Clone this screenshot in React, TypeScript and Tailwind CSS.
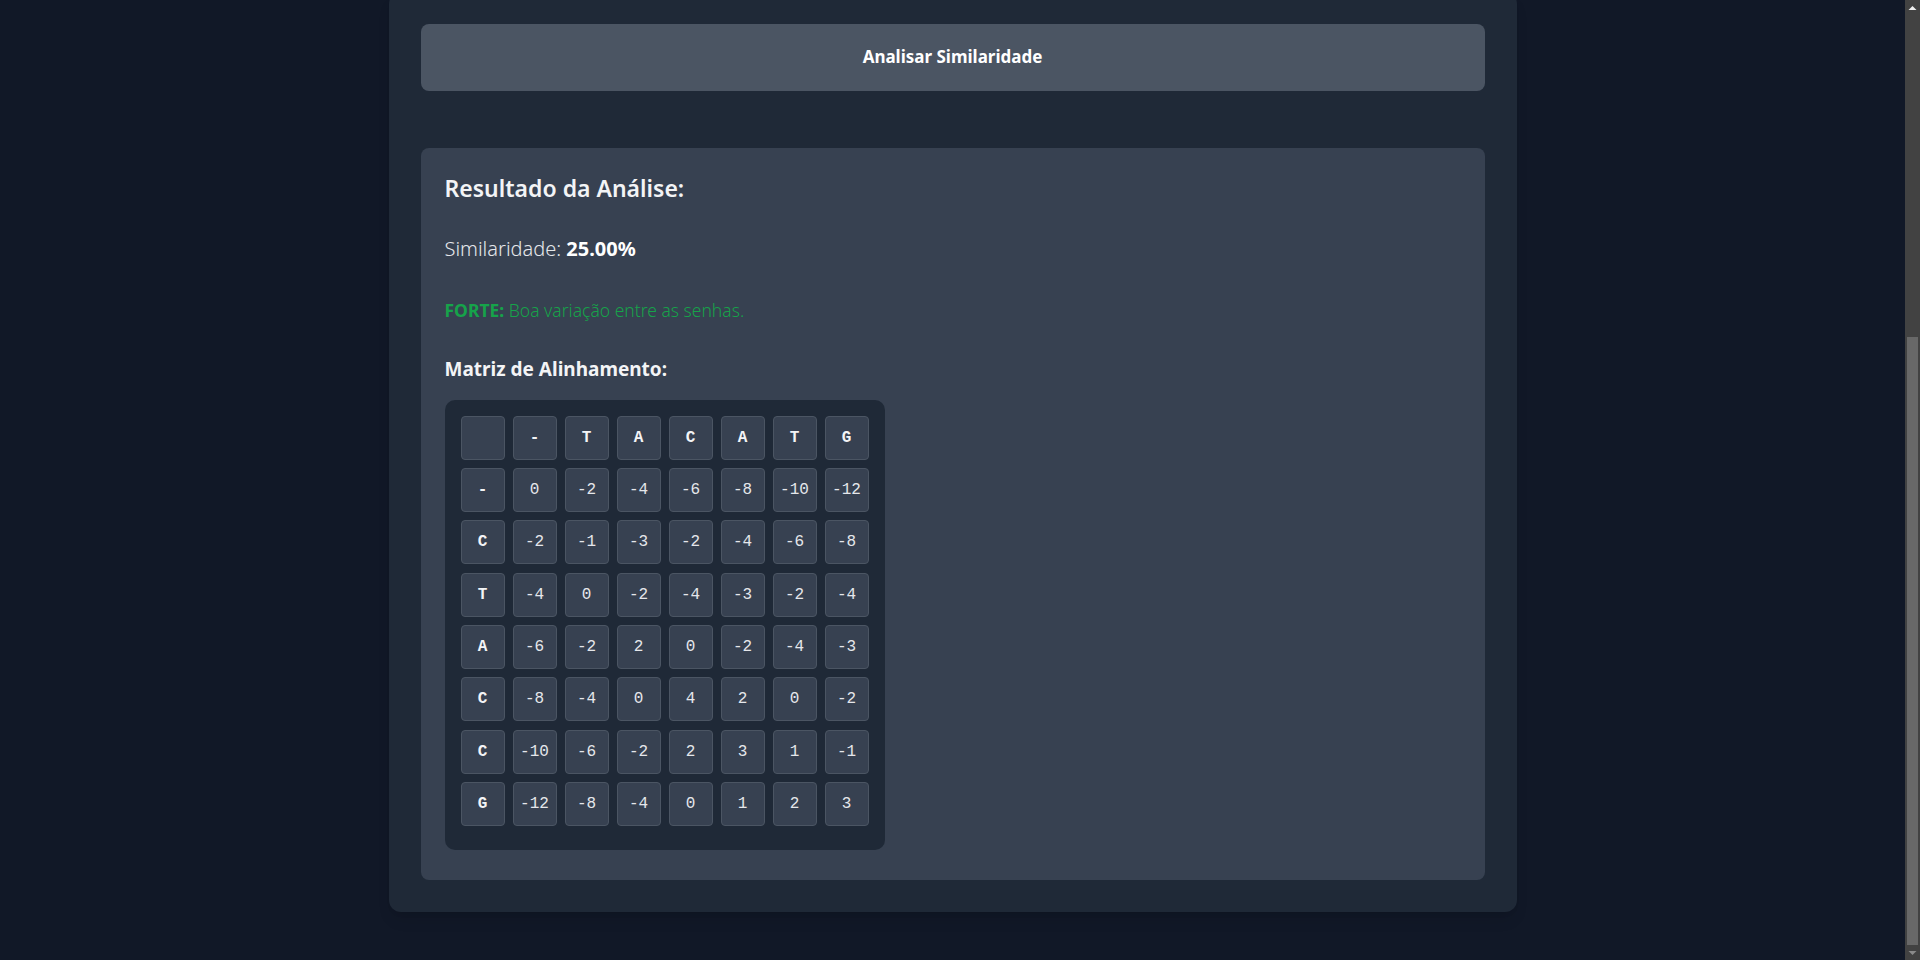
import React from "react";

const header = ["", "-", "T", "A", "C", "A", "T", "G"];
const rows: { label: string; values: number[] }[] = [
  { label: "-", values: [0, -2, -4, -6, -8, -10, -12] },
  { label: "C", values: [-2, -1, -3, -2, -4, -6, -8] },
  { label: "T", values: [-4, 0, -2, -4, -3, -2, -4] },
  { label: "A", values: [-6, -2, 2, 0, -2, -4, -3] },
  { label: "C", values: [-8, -4, 0, 4, 2, 0, -2] },
  { label: "C", values: [-10, -6, -2, 2, 3, 1, -1] },
  { label: "G", values: [-12, -8, -4, 0, 1, 2, 3] },
];

function Cell({ children, bold }: { children?: React.ReactNode; bold?: boolean }) {
  return (
    <div
      className={
        "flex h-[44px] w-[44px] items-center justify-center rounded border border-[#4b5563] bg-[#374151] text-base " +
        (bold ? "font-bold text-[#f3f4f6]" : "font-normal text-[#e5e7eb]")
      }
    >
      {children}
    </div>
  );
}

function Scrollbar() {
  return (
    <div className="flex h-full w-[15px] shrink-0 flex-col bg-[#424242]">
      <div className="flex h-[15px] items-center justify-center">
        <svg width="9" height="6" viewBox="0 0 9 6">
          <path d="M0.5 5 L4.5 1 L8.5 5 Z" fill="#f0f0f0" />
        </svg>
      </div>
      <div className="flex flex-1 flex-col justify-end">
        <div className="mx-[2px] h-[608px] bg-[#686868]" />
      </div>
      <div className="flex h-[15px] items-center justify-center">
        <svg width="9" height="6" viewBox="0 0 9 6">
          <path d="M0.5 1 L4.5 5 L8.5 1 Z" fill="#8a8a8a" />
        </svg>
      </div>
    </div>
  );
}

export default function App() {
  return (
    <div
      className="flex h-screen overflow-hidden bg-[#111827]"
      style={{ fontFamily: "'Noto Sans', 'Open Sans', sans-serif" }}
    >
      <main className="flex h-full flex-1 flex-col justify-end overflow-hidden pb-12">
        <div className="mx-auto w-[1128px] shrink-0 rounded-xl bg-[#1f2937] p-8 shadow-lg">
          <button className="flex h-[67px] w-full items-center justify-center rounded-lg bg-[#4b5563] text-[17px] font-bold text-white">
            Analisar Similaridade
          </button>

          <div className="mt-[57px] rounded-lg bg-[#374151] px-6 pt-[24px] pb-[30px]">
            <h2 className="text-[23px] font-semibold leading-8 text-[#f3f4f6]">Resultado da Análise:</h2>
            <p className="mt-[31px] text-xl font-light leading-7 text-[#e5e7eb]">
              Similaridade: <span className="font-bold text-white">25.00%</span>
            </p>
            <p className="mt-[33px] text-[17.5px] font-light leading-7 text-[#16a34a]">
              <span className="font-bold">FORTE:</span> Boa variação entre as senhas.
            </p>
            <h3 className="mt-[31px] text-[19px] font-bold leading-7 text-[#f3f4f6]">Matriz de Alinhamento:</h3>
            <div
              className="mt-[17px] inline-flex flex-col gap-[8.33px] rounded-[10px] bg-[#1f2937] p-4 pb-[24px]"
              style={{ fontFamily: "'Liberation Mono', monospace" }}
            >
              <div className="flex gap-2">
                {header.map((h, i) => (
                  <Cell key={i} bold>
                    {h}
                  </Cell>
                ))}
              </div>
              {rows.map((r, ri) => (
                <div key={ri} className="flex gap-2">
                  <Cell bold>{r.label}</Cell>
                  {r.values.map((v, vi) => (
                    <Cell key={vi}>{v}</Cell>
                  ))}
                </div>
              ))}
            </div>
          </div>
        </div>
      </main>
      <Scrollbar />
    </div>
  );
}
